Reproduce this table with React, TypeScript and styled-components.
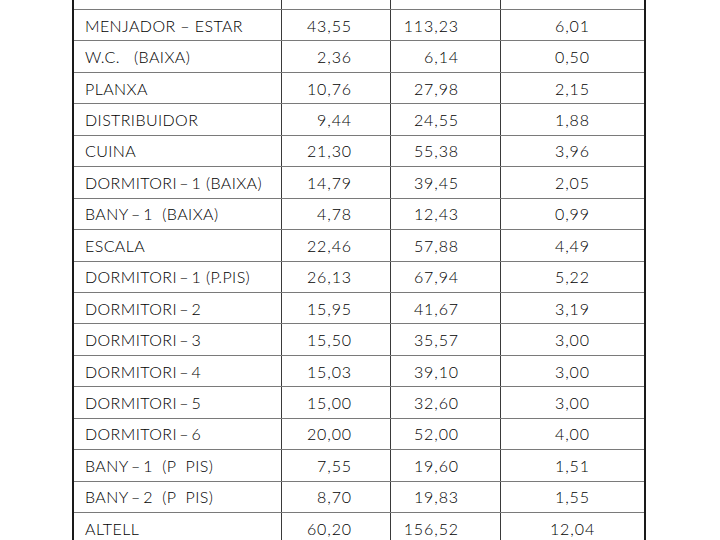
import React from "react";
import styled, { createGlobalStyle } from "styled-components";

const Global = createGlobalStyle`
  html, body { margin: 0; padding: 0; background: #ffffff; }
  body { overflow: hidden; }
`;

const Page = styled.div`
  width: 720px;
  height: 540px;
  overflow: hidden;
  background: #ffffff;
`;

const Table = styled.div`
  margin-top: -21.44px;
  margin-left: 72px;
  width: 570px;
  border-left: 2px solid #1a1a1a;
  border-right: 2px solid #1a1a1a;
  font-family: "Lato", "DejaVu Sans", sans-serif;
  font-weight: 300;
  color: #000;
`;

const Row = styled.div`
  display: grid;
  grid-template-columns: 208px 109px 110px 143px;
  height: 31.44px;
  box-sizing: border-box;
  border-bottom: 1px solid #7a7a7a;
`;

const Cell = styled.div<{ $align: "left" | "right" | "center"; $pad?: number; $last?: boolean }>`
  display: flex;
  align-items: center;
  justify-content: ${(p) =>
    p.$align === "left" ? "flex-start" : p.$align === "right" ? "flex-end" : "center"};
  padding-left: ${(p) => (p.$align === "left" ? 11 : 0)}px;
  padding-right: ${(p) => p.$pad ?? 0}px;
  border-right: ${(p) => (p.$last ? "none" : "1px solid #3a3a3a")};
  font-size: 16px;
  letter-spacing: ${(p) => (p.$align === "left" ? 0.4 : 0.9)}px;
  white-space: pre;
  box-sizing: border-box;
`;

const S = "\u2009–\u2009";

const rows: [string, string, string, string][] = [
  ["", "", "", ""],
  [`MENJADOR – ESTAR`, "43,55", "113,23", "6,01"],
  ["W.C.   (BAIXA)", "2,36", "6,14", "0,50"],
  ["PLANXA", "10,76", "27,98", "2,15"],
  ["DISTRIBUIDOR", "9,44", "24,55", "1,88"],
  ["CUINA", "21,30", "55,38", "3,96"],
  [`DORMITORI${S}1 (BAIXA)`, "14,79", "39,45", "2,05"],
  [`BANY${S}1  (BAIXA)`, "4,78", "12,43", "0,99"],
  ["ESCALA", "22,46", "57,88", "4,49"],
  [`DORMITORI${S}1 (P.PIS)`, "26,13", "67,94", "5,22"],
  [`DORMITORI${S}2`, "15,95", "41,67", "3,19"],
  [`DORMITORI${S}3`, "15,50", "35,57", "3,00"],
  [`DORMITORI${S}4`, "15,03", "39,10", "3,00"],
  [`DORMITORI${S}5`, "15,00", "32,60", "3,00"],
  [`DORMITORI${S}6`, "20,00", "52,00", "4,00"],
  [`BANY${S}1  (P  PIS)`, "7,55", "19,60", "1,51"],
  [`BANY${S}2  (P  PIS)`, "8,70", "19,83", "1,55"],
  ["ALTELL", "60,20", "156,52", "12,04"],
];

export default function App() {
  return (
    <Page>
      <Global />
      <Table>
        {rows.map((r, i) => (
          <Row key={i}>
            <Cell $align="left">{r[0]}</Cell>
            <Cell $align="right" $pad={38}>{r[1]}</Cell>
            <Cell $align="right" $pad={41}>{r[2]}</Cell>
            <Cell $align="center" $last>{r[3]}</Cell>
          </Row>
        ))}
      </Table>
    </Page>
  );
}
